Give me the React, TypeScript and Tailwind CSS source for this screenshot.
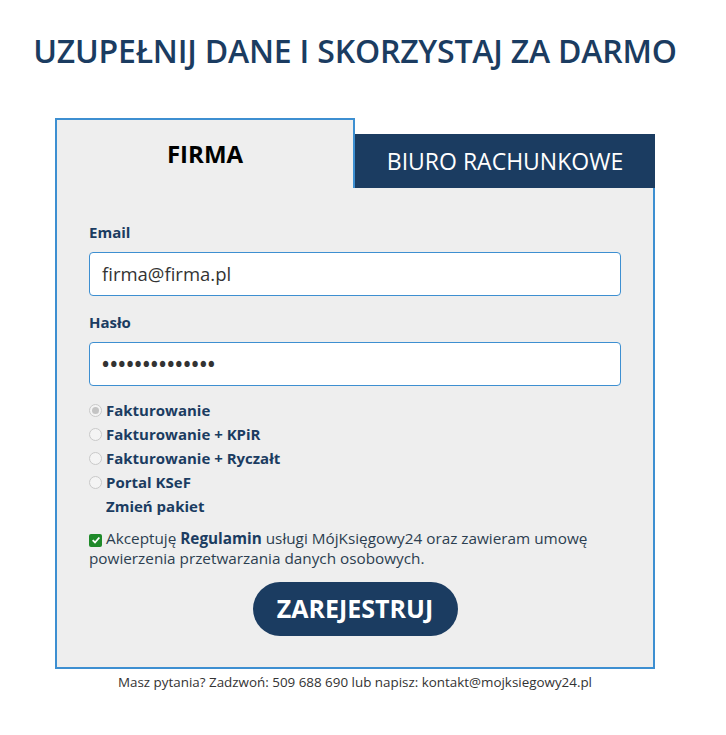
import React from "react";

const font = { fontFamily: '"Open Sans", "Noto Sans", sans-serif' };

function Radio({ checked }: { checked?: boolean }) {
  return (
    <span className="flex size-[13px] shrink-0 items-center justify-center rounded-full border border-[#c9c9c9] bg-[#f4f4f4]">
      {checked && <span className="size-[7px] rounded-full bg-[#c4c4c4]" />}
    </span>
  );
}

function Plan({ label, checked }: { label: string; checked?: boolean }) {
  return (
    <li className="flex h-6 items-center gap-[4px]">
      <Radio checked={checked} />
      <span className="text-[15px] font-bold text-[#1b3c61]">{label}</span>
    </li>
  );
}

export default function App() {
  return (
    <div className="min-h-[735px] bg-white pt-[29px]" style={font}>
      <div className="w-[710px]">
        <h1 className="text-center text-[32px] font-semibold leading-[44px] tracking-[-0.2px] text-[#1b3c61]">
          UZUPEŁNIJ DANE I SKORZYSTAJ ZA DARMO
        </h1>

        <div className="mx-auto mt-[45px] w-[600px]">
          <div className="flex items-end">
            <div className="flex h-[70px] w-[300px] items-center justify-center border-x-2 border-t-2 border-[#3d8fd1] bg-[#eeeeee]">
              <span className="text-[24px] font-bold text-black">FIRMA</span>
            </div>
            <div className="flex h-[54px] flex-1 items-center justify-center bg-[#1b3c61]">
              <span className="text-[23px] text-white">BIURO RACHUNKOWE</span>
            </div>
          </div>

          <div className="border-x-2 border-b-2 border-[#3d8fd1] bg-[#eeeeee] px-[32px] pb-[31px] pt-[34px]">
            <label className="block text-[15px] font-bold leading-5 text-[#1b3c61]">Email</label>
            <div className="mt-[10px] flex h-[44px] items-center rounded-[4px] border border-[#3d8fd1] bg-white px-3 text-[18.5px] text-[#333]">
              firma@firma.pl
            </div>

            <label className="mt-[16px] block text-[15px] font-bold leading-5 text-[#1b3c61]">Hasło</label>
            <div className="mt-[10px] flex h-[44px] items-center rounded-[4px] border border-[#3d8fd1] bg-white px-3 text-[19px] font-bold tracking-[1px] text-[#333]">
              ••••••••••••••
            </div>

            <ul className="mt-[12px]">
              <Plan label="Fakturowanie" checked />
              <Plan label="Fakturowanie + KPiR" />
              <Plan label="Fakturowanie + Ryczałt" />
              <Plan label="Portal KSeF" />
              <li className="flex h-6 items-center pl-[17px] text-[15px] font-bold text-[#1b3c61]">Zmień pakiet</li>
            </ul>

            <div className="mt-[10px] text-[15.3px] leading-[20px] text-[#2c3e50]">
              <span className="mr-[4px] inline-flex size-[13px] translate-y-[1px] items-center justify-center rounded-[2px] bg-[#1f8a2a] align-baseline">
                <svg viewBox="0 0 12 12" className="size-[10px]" fill="none" stroke="white" strokeWidth="2.2">
                  <path d="M2 6.2 4.8 9 10 3" />
                </svg>
              </span>
              <span>
                Akceptuję <strong className="font-bold text-[#1b3c61]">Regulamin</strong> usługi MójKsięgowy24 oraz zawieram umowę powierzenia przetwarzania danych osobowych.
              </span>
            </div>

            <div className="mt-[14px] flex justify-center">
              <button className="h-[54px] w-[205px] rounded-full bg-[#1b3c61] text-[25px] font-bold text-white">
                ZAREJESTRUJ
              </button>
            </div>
          </div>

          <p className="mt-[3px] text-center text-[13.4px] text-[#333]">
            Masz pytania? Zadzwoń: 509 688 690 lub napisz: kontakt@mojksiegowy24.pl
          </p>
        </div>
      </div>
    </div>
  );
}
